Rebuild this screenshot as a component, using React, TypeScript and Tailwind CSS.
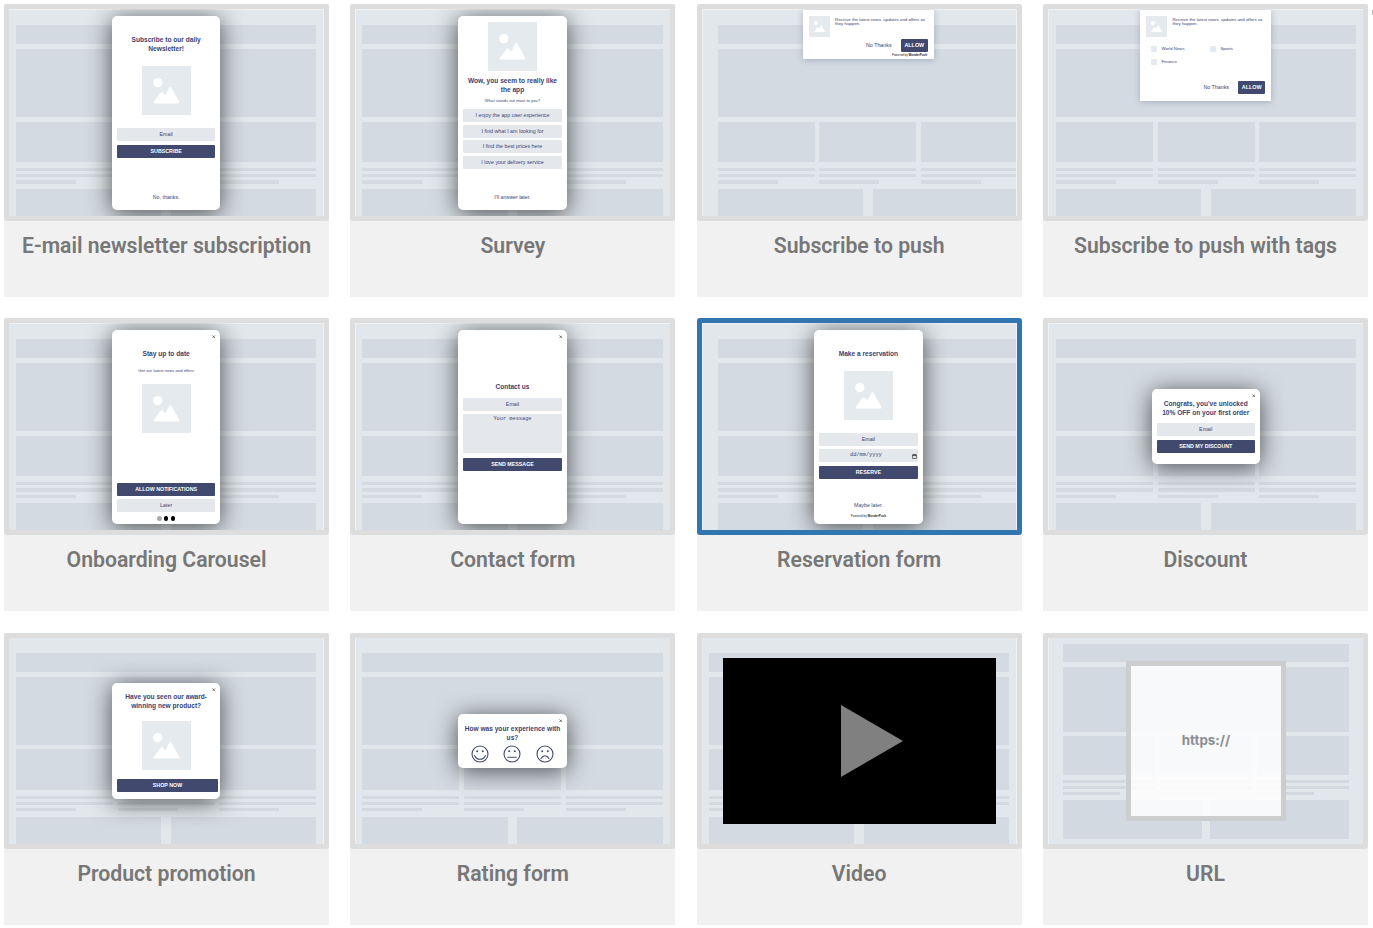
import * as React from 'react';

import clsx from 'clsx';

type WithClass = { className?: string };
type WithChildren = WithClass & { children?: React.ReactNode };

function TextLines() {
  return (
    <div className="flex w-[97px] flex-col gap-[3px]">
      <div className="h-[3px] bg-[#d4dadf]" />
      <div className="h-[3.3px] bg-[#d4dadf]" />
      <div className="h-[3.3px] w-[60px] bg-[#d4dadf]" />
    </div>
  );
}

// Grey page skeleton that sits behind every popup
function Wireframe({ className }: WithClass) {
  return (
    <div className={clsx('h-full overflow-hidden bg-[#e1e7eb] pt-[15px]', className)}>
      <div className="flex w-[300.4px] flex-col">
        <div className="h-[19px] bg-[#d3dae1]" />
        <div className="mt-[5px] h-[68px] bg-[#d3dae1]" />
        <div className="mt-[4.5px] flex justify-between">
          <div className="h-[40.5px] w-[97px] bg-[#d3dae1]" />
          <div className="h-[40.5px] w-[97px] bg-[#d3dae1]" />
          <div className="h-[40.5px] w-[97px] bg-[#d3dae1]" />
        </div>
        <div className="mt-[6px] flex justify-between">
          <TextLines />
          <TextLines />
          <TextLines />
        </div>
        <div className="mt-[5.4px] flex justify-between">
          <div className="h-[40px] w-[145.4px] bg-[#d3dae1]" />
          <div className="h-[40px] w-[145.4px] bg-[#d3dae1]" />
        </div>
      </div>
    </div>
  );
}

function SmallWireframe() {
  return (
    <div className="ml-px h-full bg-[#e1e7eb] pt-[6.5px] pl-[14px]">
      <div className="flex w-[286px] flex-col">
        <div className="h-[18px] bg-[#d2d9e1]" />
        <div className="mt-[5px] h-[65px] bg-[#d2d9e1]" />
        <div className="mt-[4px] flex justify-between">
          <div className="h-[39px] w-[92px] bg-[#d2d9e1]" />
          <div className="h-[39px] w-[92px] bg-[#d2d9e1]" />
          <div className="h-[39px] w-[92px] bg-[#d2d9e1]" />
        </div>
        {['mt-[5px] w-[92px]', 'mt-[3px] w-[92px]', 'mt-[3px] w-[57px]'].map((line) => (
          <div key={line} className="grid grid-cols-[97px_97px_92px]">
            <div className={clsx('h-[3px] bg-[#d2d9e1]', line)} />
            <div className={clsx('h-[3px] bg-[#d2d9e1]', line)} />
            <div className={clsx('h-[3px] bg-[#d2d9e1]', line)} />
          </div>
        ))}
        <div className="mt-[5px] flex justify-between">
          <div className="h-[39px] w-[138.6px] bg-[#d2d9e1]" />
          <div className="h-[39px] w-[138.6px] bg-[#d2d9e1]" />
        </div>
      </div>
    </div>
  );
}

function Card({ title, selected, children }: { title: string; selected?: boolean; children: React.ReactNode }) {
  return (
    <div className="h-[292.67px] bg-[#f1f1f1]">
      <div
        className={clsx(
          'relative h-[216.67px] overflow-hidden rounded-[3px] border-[5px]',
          selected ? 'border-[#3276b1]' : 'border-[#ddd]',
        )}
      >
        {children}
      </div>
      <h3 className="mt-[12px] text-center font-['Roboto',sans-serif] text-[21.2px] leading-[26.6px] font-semibold whitespace-nowrap text-[#777]">
        {title}
      </h3>
    </div>
  );
}

function Modal({ className, children }: WithChildren) {
  return (
    <div
      className={clsx(
        'absolute flex w-[108.3px] flex-col items-center rounded-[5px] bg-white px-[5px] shadow-[0_3px_24px_rgba(0,0,0,0.65)]',
        className,
      )}
    >
      {children}
    </div>
  );
}

function PushPrompt({ className, children }: WithChildren) {
  return (
    <div
      className={clsx(
        'absolute top-px w-[131px] rounded-b-[1px] bg-white px-[6px] pt-[6px] shadow-[0_1px_6px_rgba(60,70,110,0.3)]',
        className,
      )}
    >
      <div className="flex gap-[5px]">
        <Picture className="size-[21px]" />
        <div className="pt-[1.5px] text-[4.35px] leading-[4.7px] whitespace-nowrap">
          Receive the latest news, updates and offers as
          <br />
          they happen.
        </div>
      </div>
      {children}
    </div>
  );
}

function PushActions({ className }: WithClass) {
  return (
    <div className={clsx('flex items-center justify-end gap-[9px] text-[5.3px]', className)}>
      <span className="pt-[1px]">No Thanks</span>
      <span className="flex h-[13px] w-[27.5px] items-center justify-center rounded-[1px] bg-[#41496f] text-[5.4px] font-bold text-white">
        ALLOW
      </span>
    </div>
  );
}

function Picture({ className }: WithClass) {
  return (
    <svg viewBox="0 0 49 49" className={clsx('shrink-0', className)}>
      <rect width="49" height="49" fill="#e4eaed" />
      <circle cx="15.8" cy="16.6" r="4.7" fill="#fff" />
      <path
        d="M11.7 36 18.4 26.9Q19.7 25.5 21 26.9L23.4 29.4 27 22.2Q28.4 19.8 29.8 22.2L37.3 36Q37.7 37.5 36.5 37.5H12.2Q11 37.3 11.7 36Z"
        fill="#fff"
      />
    </svg>
  );
}

function Title({ className, children }: WithChildren) {
  return (
    <div className={clsx('text-center text-[6.6px] leading-[9.3px] font-bold whitespace-nowrap', className)}>
      {children}
    </div>
  );
}

function Field({ className, children }: WithChildren) {
  return (
    <div
      className={clsx(
        'flex h-[13px] w-full items-center justify-center rounded-[1px] bg-[#e4e8ed] pt-[1px] text-[5.3px] whitespace-nowrap',
        className,
      )}
    >
      {children}
    </div>
  );
}

function Action({ className, children }: WithChildren) {
  return (
    <div
      className={clsx(
        'flex h-[13px] shrink-0 items-center justify-center rounded-[1px] bg-[#41496f] pt-[0.8px] text-[5.3px] font-bold whitespace-nowrap text-white',
        className,
      )}
    >
      {children}
    </div>
  );
}

function Note({ className, children }: WithChildren) {
  return <div className={clsx('leading-[8px] whitespace-nowrap', className)}>{children}</div>;
}

function Close() {
  return (
    <svg viewBox="0 0 4 4" className="absolute top-[5px] right-[4.6px] size-[3.5px]" stroke="#333" strokeWidth="0.7">
      <path d="M.5.5l3 3M3.5.5l-3 3" />
    </svg>
  );
}

function Powered({ className }: WithClass) {
  return (
    <div className={clsx('text-[3px] leading-[4px] whitespace-nowrap text-[#222]', className)}>
      Powered by <b>WonderPush</b>
    </div>
  );
}

function Face({ mouth }: { mouth: string }) {
  return (
    <svg viewBox="0 0 18 18" className="size-[18px]" fill="none" stroke="#41496f" strokeWidth="1.1">
      <circle cx="9" cy="9" r="8" />
      <circle cx="6.2" cy="6.3" r="1" fill="#41496f" stroke="none" />
      <circle cx="11.8" cy="6.3" r="1" fill="#41496f" stroke="none" />
      <path d={mouth} strokeLinecap="round" />
    </svg>
  );
}

const TAGS = ['World News', 'Sports', 'Finance'];

const ANSWERS = [
  'I enjoy the app user experience',
  'I find what I am looking for',
  'I find the best prices here',
  'I love your delivery service',
];

export default function App() {
  return (
    <div className="relative h-[928px] w-[1373px] overflow-hidden bg-white p-[4px] font-['Liberation_Sans',Arial,sans-serif] text-[#3b4371]">
      <div className="grid w-[1364px] grid-cols-[repeat(4,325px)] justify-between gap-y-[21.7px]">
        <Card title="E-mail newsletter subscription">
          <Wireframe className="mt-px mr-px pl-[7px]" />
          <Modal className="top-[7px] left-[103px] h-[194px]">
            <Title className="mt-[19px]">
              Subscribe to our daily
              <br />
              Newsletter!
            </Title>
            <Picture className="mt-[12.4px] size-[49px]" />
            <Field className="mt-[13px]">Email</Field>
            <Action className="mt-[4px] w-full">SUBSCRIBE</Action>
            <Note className="mt-[35px] text-[5.3px]">No, thanks.</Note>
          </Modal>
        </Card>

        <Card title="Survey">
          <Wireframe className="mt-px ml-px pl-[6px]" />
          <Modal className="top-[7px] left-[103px] h-[194px]">
            <Picture className="mt-[6px] size-[49px]" />
            <Title className="mt-[5px]">
              Wow, you seem to really like
              <br />
              the app
            </Title>
            <Note className="mt-[2.4px] text-[4.2px]">What stands out most to you?</Note>
            <div className="mt-[4px] flex w-full flex-col gap-[2.7px]">
              {ANSWERS.map((a) => (
                <Field key={a}>{a}</Field>
              ))}
            </div>
            <Note className="mt-[24px] text-[5.3px]">I&apos;ll answer later.</Note>
          </Modal>
        </Card>

        <Card title="Subscribe to push">
          <Wireframe className="mt-px mr-px ml-px pl-[15px]" />
          <PushPrompt className="left-[101.4px] h-[49px]">
            <PushActions className="mt-[1.5px]" />
            <Powered className="mt-[1.5px] pr-[1px] text-right" />
          </PushPrompt>
        </Card>

        <Card title="Subscribe to push with tags">
          <Wireframe className="mt-px ml-px pl-[7px]" />
          <PushPrompt className="left-[92.5px] h-[91px]">
            <div className="mt-[9px] grid grid-cols-[59px_auto] gap-y-[6.5px] pl-[4.5px] text-[4.3px] leading-[6px]">
              {TAGS.map((tag) => (
                <div key={tag} className="flex items-center gap-[4.5px]">
                  <span className="size-[6px] rounded-[1px] bg-[#e4eaed]" />
                  {tag}
                </div>
              ))}
            </div>
            <PushActions className="mt-[16px]" />
          </PushPrompt>
        </Card>

        <Card title="Onboarding Carousel">
          <Wireframe className="mt-px mr-px pl-[7px]" />
          <Modal className="top-[7px] left-[103px] h-[194px]">
            <Close />
            <Title className="mt-[19px]">Stay up to date</Title>
            <Note className="mt-[8.7px] text-[4.2px]">Get our latest news and offers</Note>
            <Picture className="mt-[9px] size-[49px]" />
            <Action className="mt-[50px] w-full">ALLOW NOTIFICATIONS</Action>
            <Field className="mt-[3px]">Later</Field>
            <div className="mt-[4px] flex gap-[2.3px]">
              <span className="size-[4.3px] rounded-full bg-[#aaa]" />
              <span className="size-[4.3px] rounded-full bg-black" />
              <span className="size-[4.3px] rounded-full bg-black" />
            </div>
          </Modal>
        </Card>

        <Card title="Contact form">
          <Wireframe className="mt-px ml-px pl-[6px]" />
          <Modal className="top-[7px] left-[103px] h-[194px]">
            <Close />
            <Title className="mt-[52px]">Contact us</Title>
            <Field className="mt-[6.7px]">Email</Field>
            <div className="mt-[3px] h-[39px] w-full rounded-[1px] bg-[#e4e8ed] pt-[1.5px] text-center font-['Liberation_Mono',monospace] text-[5.3px] leading-[6px]">
              Your message
            </div>
            <Action className="mt-[5px] w-full">SEND MESSAGE</Action>
          </Modal>
        </Card>

        <Card title="Reservation form" selected>
          <Wireframe className="mt-px mr-px ml-px pl-[15px]" />
          <Modal className="top-[7px] left-[112.6px] h-[194px]">
            <Title className="mt-[19px]">Make a reservation</Title>
            <Picture className="mt-[12.7px] size-[49px]" />
            <Field className="mt-[13px]">Email</Field>
            <Field className="relative mt-[3px] font-['Liberation_Mono',monospace]">
              <span className="pr-[5px]">dd/mm/yyyy</span>
              <svg viewBox="0 0 5 5" className="absolute right-[1px] size-[5px]" fill="none" stroke="#222">
                <path d="M.5 1h4" strokeWidth="1.4" />
                <path d="M.6 1v3.5h3.8V1" strokeWidth="0.6" />
              </svg>
            </Field>
            <Action className="mt-[3.5px] w-full">RESERVE</Action>
            <Note className="mt-[22px] text-[5.3px]">Maybe later.</Note>
            <Powered className="mt-[5px]" />
          </Modal>
        </Card>

        <Card title="Discount">
          <Wireframe className="mt-px ml-px pl-[7px]" />
          <Modal className="top-[66px] left-[103.6px] h-[75px]">
            <Close />
            <Title className="mt-[9.5px]">
              Congrats, you&apos;ve unlocked
              <br />
              10% OFF on your first order
            </Title>
            <Field className="mt-[5.5px]">Email</Field>
            <Action className="mt-[4px] w-full">SEND MY DISCOUNT</Action>
          </Modal>
        </Card>

        <Card title="Product promotion">
          <Wireframe className="mr-px pl-[7px]" />
          <Modal className="top-[45.5px] left-[103px] h-[116px]">
            <Close />
            <Title className="mt-[9px]">
              Have you seen our award-
              <br />
              winning new product?
            </Title>
            <Picture className="mt-[10.5px] size-[49px]" />
            <Action className="mt-[9px] w-[101px] self-start">SHOP NOW</Action>
          </Modal>
        </Card>

        <Card title="Rating form">
          <Wireframe className="ml-px pl-[6px]" />
          <Modal className="top-[76.5px] left-[103px] h-[54px]">
            <Close />
            <Title className="mt-[9.5px] leading-[9px]">
              How was your experience with
              <br />
              us?
            </Title>
            <div className="mt-[3.3px] flex gap-[14.8px]">
              <Face mouth="M3.6 10.5Q5 14.3 9 14.3T14.4 10.5" />
              <Face mouth="M4.8 12.2h8.4" />
              <Face mouth="M5 13.6q1.5-2.8 4-2.8t4 2.8" />
            </div>
          </Modal>
        </Card>

        <Card title="Video">
          <Wireframe className="mr-px pl-[7px]" />
          <div className="absolute top-[20.5px] left-[21.3px] flex h-[166px] w-[273px] items-center bg-black pl-[118px]">
            <svg viewBox="0 0 62 72" className="h-[72px] w-[62px]" fill="#808080">
              <path d="M0 0l62 36L0 72Z" />
            </svg>
          </div>
        </Card>

        <Card title="URL">
          <SmallWireframe />
          <div className="absolute top-[23.5px] left-[78px] flex size-[160px] items-center justify-center border-[5px] border-[#cbcdce] bg-white/85 bg-clip-padding pb-[2px] font-['Inter',sans-serif] text-[13.4px] font-bold text-[#8b8e93]">
            https://
          </div>
        </Card>
      </div>
      <span className="absolute top-[10px] right-0 h-[5px] w-px bg-[#bbb]" />
    </div>
  );
}
